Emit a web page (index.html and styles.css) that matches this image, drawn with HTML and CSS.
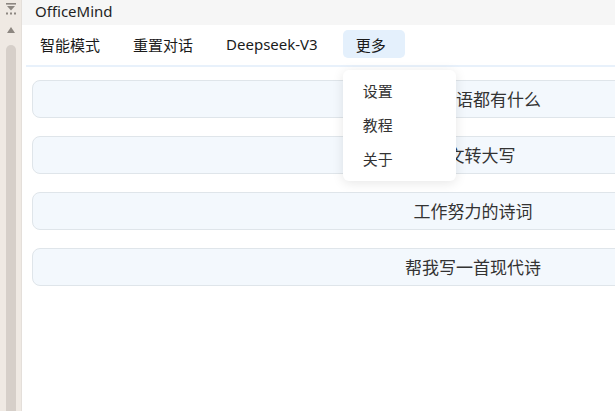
FILE: index.html
```html
<!DOCTYPE html>
<html lang="zh-CN">
<head>
  <meta charset="UTF-8">
  <meta name="viewport" content="width=device-width, initial-scale=1.0">
  <title>OfficeMind</title>
  <link rel="stylesheet" href="styles.css">
</head>
<body>
  <div class="window">
    <!-- 左侧滚动条 -->
    <div class="side-bar">
      <svg class="pin-icon" width="10" height="12" viewBox="0 0 10 12">
        <rect x="0" y="0" width="10" height="1.6" fill="#8d8781"/>
        <path d="M1 3 L9 3 L5 7.5 Z" fill="#8d8781"/>
        <rect x="0" y="9.5" width="2" height="2" fill="#8d8781"/>
        <rect x="4" y="9.5" width="2" height="2" fill="#8d8781"/>
        <rect x="8" y="9.5" width="2" height="2" fill="#8d8781"/>
      </svg>
      <svg class="arrow-up" width="8" height="6" viewBox="0 0 8 6">
        <path d="M4 0 L8 6 L0 6 Z" fill="#8d8781"/>
      </svg>
      <div class="thumb"></div>
    </div>

    <div class="main">
      <div class="title-bar">OfficeMind</div>

      <div class="tabs">
        <button class="tab">智能模式</button>
        <button class="tab">重置对话</button>
        <button class="tab">Deepseek-V3</button>
        <div class="more-wrap">
          <button class="tab active">更多</button>
          <ul class="dropdown">
            <li>设置</li>
            <li>教程</li>
            <li>关于</li>
          </ul>
        </div>
      </div>

      <div class="divider"></div>

      <div class="prompt-list">
        <div class="prompt-card">英语俚语都有什么</div>
        <div class="prompt-card">英文转大写</div>
        <div class="prompt-card">工作努力的诗词</div>
        <div class="prompt-card">帮我写一首现代诗</div>
      </div>
    </div>
  </div>
</body>
</html>
```

FILE: styles.css
```css
html, body {
  margin: 0;
  padding: 0;
  height: 100%;
  overflow: hidden;
}
body {
  font-family: "Noto Sans", "Noto Sans CJK SC", sans-serif;
  background: #ffffff;
  color: #222;
}
.window {
  display: flex;
  height: 411px;
}

/* 滚动条 */
.side-bar {
  width: 21px;
  flex: none;
  background: #efe9e3;
  border-right: 1px solid #e4dfda;
  display: flex;
  flex-direction: column;
  align-items: center;
}
.pin-icon {
  margin-top: 3px;
}
.arrow-up {
  margin-top: 12px;
}
.thumb {
  margin-top: 12px;
  width: 10px;
  flex: 1;
  background: #d6cfc9;
  border-radius: 5px 5px 0 0;
}

.main {
  width: 900px;
  flex: none;
}
.title-bar {
  height: 25px;
  background: #f6f6f6;
  font-size: 15px;
  line-height: 22px;
  padding-left: 13px;
  color: #1f1f1f;
}

/* 顶部按钮 */
.tabs {
  display: flex;
  align-items: center;
  gap: 9px;
  padding: 5px 0 0 6px;
  height: 28px;
}
.tab {
  font-family: inherit;
  font-size: 15px;
  color: #1a1a1a;
  background: none;
  border: none;
  height: 28px;
  padding: 0 12px;
  border-radius: 5px;
  cursor: pointer;
}
.tab.active {
  background: #e4f0fc;
  width: 62px;
  padding: 0 0 0 13px;
  text-align: left;
}
.more-wrap {
  position: relative;
  margin-left: 4px;
}
.dropdown {
  position: absolute;
  top: 40px;
  left: 0;
  width: 113px;
  margin: 0;
  padding: 4px 0 5px;
  list-style: none;
  background: #fff;
  border-radius: 6px;
  box-shadow: 0 2px 12px rgba(0, 0, 0, 0.1);
  z-index: 10;
}
.dropdown li {
  font-size: 15px;
  color: #333;
  height: 34px;
  line-height: 34px;
  padding-left: 20px;
}

.divider {
  height: 2px;
  background: #e8f1fb;
  margin: 7px 0 0 4px;
}

/* 提示卡片 */
.prompt-list {
  display: flex;
  flex-direction: column;
  gap: 18px;
  padding: 13px 0 0 10px;
}
.prompt-card {
  width: 880px;
  height: 36px;
  line-height: 37px;
  background: #f3f8fd;
  border: 1px solid #dfe5ea;
  border-radius: 8px;
  text-align: center;
  font-size: 17px;
  color: #333;
}
```
